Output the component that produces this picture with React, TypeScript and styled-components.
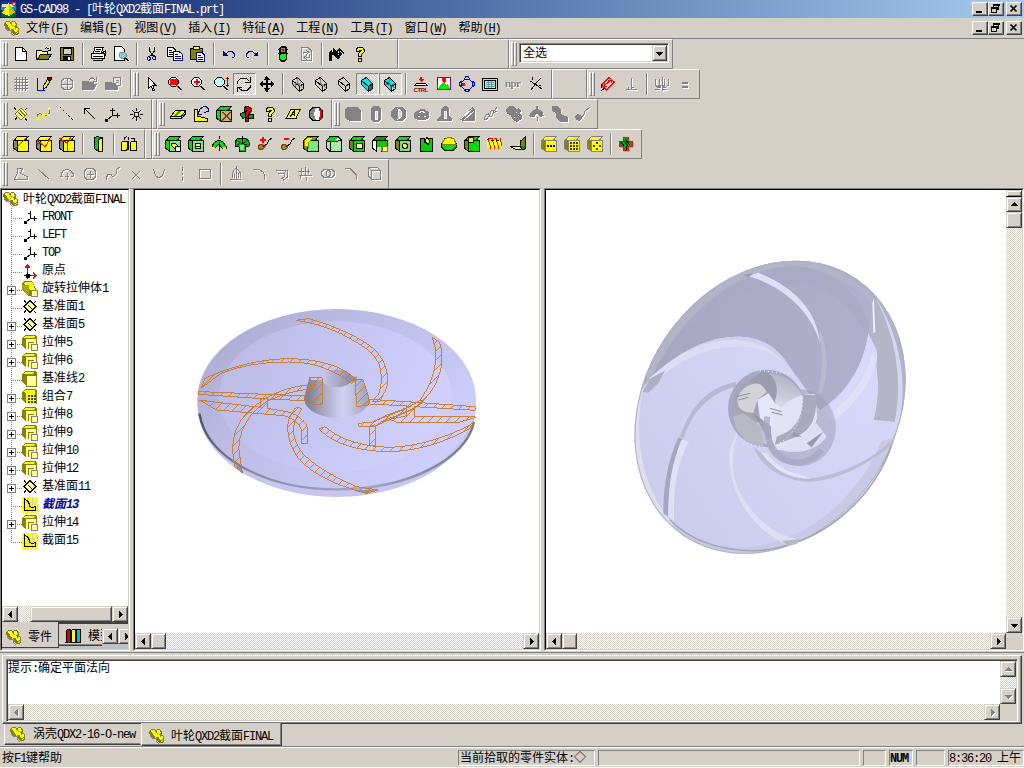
import React from "react";
import styled, { createGlobalStyle, css } from "styled-components";

const face = "#d4d0c8";
const shade = "#808080";
const dark = "#404040";

const Global = createGlobalStyle`
  * { box-sizing: border-box; }
  html, body { margin: 0; padding: 0; background: #fff; overflow: hidden; }
  body { font: 12px/14px "Noto Sans CJK SC", sans-serif; color: #000; }
`;

/* ---------- text ---------- */

const Line = styled.span`
  display: block;
  flex: none;
  white-space: pre;
  height: 14px;
  font: 12px/12px "Noto Sans CJK SC", sans-serif;
`;

const Latin = styled.span`
  font-family: "Liberation Mono", monospace;
  font-size: 12px;
  letter-spacing: -1.2px;
`;

function Txt({ children, className }: { children: string; className?: string }) {
  const runs = children.match(/[\x20-\x7e]+|[^\x20-\x7e]+/g) || [];
  return (
    <Line className={className}>
      {runs.map((r, i) => (/^[\x20-\x7e]/.test(r) ? <Latin key={i}>{r}</Latin> : <React.Fragment key={i}>{r}</React.Fragment>))}
    </Line>
  );
}

/* ---------- icons ---------- */

type Shape = [d: string, fill: string, stroke?: string];

const Svg = styled.svg<{ $off?: boolean }>`
  display: block;
  flex: none;
  overflow: visible;
  ${(p) => p.$off && css`filter: drop-shadow(1px 1px 0 #fff);`}
`;

const K = "#000";
const Y = "#ffff00";
const O = "#848200";
const G = "#00e000";
const R = "#ff0000";
const B = "#000084";
const D = "#848284";
const N = "none";

const cube = (front: string, side = O, top = front, line = K): Shape[] => [
  ["M.5 4.5L4.5.5H15.5L12 4.5Z", top, line],
  ["M.5 4.5L4.5 5V15.5L.5 12Z", side, line],
  ["M4.5 4.5H15.5V15.5H4.5Z", front, line],
  ["M4.5 4.5L1 3.5", N, line],
];
const wire = (front: string): Shape[] => [
  ["M2.500 4.500L7.500 1.500L13.500 7.500V12.500L9.500 15.500L2.500 8.500Z", front, K],
  ["M2.500 4.500L9.500 10.500L13.500 7.500M9.500 10.500V15", N, K],
];
const lens = (fill: string): Shape[] => [
  ["M4.500 1.500H8.500L11.500 4.500V7.500L8.500 10.500H4.500L1.500 7.500V4.500Z", fill, K],
  ["M10 10L14.500 14.500M11 10L15.500 14.500", N, K],
];
const plane: Shape[] = [
  ["M8 2L14 8L8 14L2 8Z", "#ffff94", O],
  ["M5 6L10 11M7 4.500L12 9.500", N, O],
  ["M1 1.500L3 3.500M12 12.500L14 14.500M2 13.500L4 11.500M12 4L14 2M6 7L9 10", N, K],
];
const treePlane: Shape[] = [
  ["M8 1.500L14 7.500L8 13.500L2 7.500Z", "#ffff94", K],
  ["M2 1.500L4 3.500M12 12L14 14M2 13.500L4 11.500M12 4L14 2M6 6L10 10", N, K],
];
const brace: Shape[] = [
  ["M0 4L2 1H5L7 3L8 1H11L13 4V7L15 8V13L13 15H10L7 12V9L4 10L0 6Z", O],
  ["M1 3L3 1.500H5L6 3L5 5H3ZM8 2H11L12 5L10 6L8 5ZM3 6L6 4L8 6L11 7V9H7L5 8ZM9 10L13 8L14 9V11L11 12ZM11 13L14 12V13L12 14Z", Y],
  ["M2 3H4M9 3H11M11 9.500H13", N, "#ffffb0"],
  ["M1 7L4 11L7 10V13L10 16", N, D],
];
const dots = "M6 6H8V8H6ZM9 6H11V8H9ZM12 6H14V8H12ZM6 9H8V11H6ZM9 9H11V11H9ZM12 9H14V11H12ZM6 12H8V14H6ZM9 12H11V14H9ZM12 12H14V14H12Z";

const icons: Record<string, Shape[]> = {
  app: [
    ["M-1-1H15V16H-1Z", "#00a0b0"], ["M-1 9H15V16H-1Z", "#006030"], ["M-1-1H15V3H-1Z", "#1030c0"], ["M0 2H13V5H0Z", "#e0e0ff"],
    ["M7 1L0 12L8 15Z", Y], ["M7 1L14 11L8 15Z", "#c6c300"], ["M11.500 .5H14.500V3.500H11.500Z", "#fff", R],
  ],
  brace,
  new: [["M2.500 1.500H9.500L13.500 5.500V14.500H2.500Z", "#fff", K], ["M9.500 1.500V5.500H13.500", N, K]],
  open: [["M.5 4.500H5.500L6.500 5.500H11.500V8.500H4.500L1.500 13.500H.5Z", "#ffff84", K], ["M4.500 8.500H15.500L12 13.500H1.500Z", O, K], ["M9 3L10.500 1.500L13.500 3.500M14.500 1V4.500H12", N, K]],
  save: [["M1.500 1.500H14.500V14.500H1.500Z", O, K], ["M4 2H12V8H4Z", face, K], ["M4 10H12V14H4Z", K], ["M9 11H11V14H9Z", "#fff"]],
  print: [["M5 1.500H13L11.500 7H3.500Z", "#fff", K], ["M1.500 7.500H14.500V12.500H1.500Z", "#fff", K], ["M3 10.500H13M3 14.500H12L14 12M6 3.500H11M5 5.500H10M12 7L15 5V10", N, K], ["M10 11H12V12H10Z", Y]],
  preview: [["M1.500.5H8.500L11.500 3.500V14.500H1.500Z", "#fff", K], ["M8 6H11L13 8V11L11 12H8L6 10V8Z", "#84d0d8", D], ["M12 12L15 15M13 12L16 15", N, K]],
  cut: [["M5.500 1V5L9.500 10M10.500 1V5L6.500 10", N, K], ["M4.500 10.500L3.500 11.500V13L4.500 14.500L6.500 13.500V11.500ZM9.500 9.500L11.500 10.500V13L10 13.500L8.500 12.500Z", N, B]],
  copy: [["M.5 1.500H6L8.500 4V10.500H.5Z", "#fff", K], ["M2 4.500H5M2 6.500H7M2 8.500H7", N, K], ["M6.500 5.500H12L15.500 8.500V14.500H6.500Z", "#fff", B], ["M8 8.500H11M8 10.500H14M8 12.500H14", N, B]],
  paste: [["M.5 2.500H12.500V13.500H.5Z", O, K], ["M4 .5H9V3.500H3.500Z", Y, K], ["M6.500 6.500H12L14.500 9V15.500H6.500Z", "#fff", B], ["M8 9.500H11M8 11.500H13M8 13.500H13", N, B]],
  undo: [["M2 5V10H7ZM2 5L7 10", B], ["M4.500 8L8 5.500H11L13.500 8V10.500L11 12", N, B]],
  redo: [["M14 5V10H9Z", B], ["M11.500 8L8 5.500H5L2.500 8V10.500L5 12", N, B]],
  light: [["M6 0H10L12 2V13L10 16H6L4 13V2Z", K], ["M6 2H10V6H6Z", D], ["M7 3H9V5H7Z", "#d00000"], ["M6 8H10L11 9V12L10 14H6L5 12V9Z", "#00ff00"], ["M3 3.500H5M11 3.500H13M3 7.500H5M11 7.500H13", N, K]],
  reload: [["M3.500 1.500H10L13.500 5V14.500H3.500Z", N, D], ["M5 8V6.500H9M8 4L11 6.500L8 8.500M11.500 8V11.500H8M9 9L6 11.500L9 14", N, D]],
  jug: [["M0 6L4 2L7 5L3 9V15H0Z", K], ["M4 8L10 2L15 7L9 14Z", K], ["M3 3V6M9 8H10M9 5V7", N, "#fff"], ["M11 5L14 8L11 11", N, "#fff"]],
  help: [["M4.500 5.500V3L6.500 1H10L12 3.500V6L9.500 8.500V10.500H6.500V7.500L9 5V4H7.500V5.500Z", Y, K], ["M6.500 12.500H9.500V15.500H6.500Z", Y, K]],
  grid: [["M3.500 1V15M6.500 1V15M9.500 1V15M12.500 1V15M1 3.500H15M1 6.500H15M1 9.500H15M1 12.500H15", N, D]],
  pencil: [["M1.500 2V14.500H9", N, "#0000ff"], ["M7.500 10L12 2.500L14.500 4.500L10 11.500L7.500 13Z", Y, K], ["M12 1H15V4L14 5L11 3Z", "#a00000", K]],
  globe: [["M5 2.500H11L13.500 5V11L11 13.500H5L2.500 11V5ZM8.500 2V14M2 8.500H14", N, D]],
  folder: [["M0 5H6L7 6H12V8H15L12 14H0Z", D], ["M7 4L10 1.500L13 4M14.500 1V5H11", N, D]],
  folder2: [["M0 6H6L7 7H13V14H0Z", D], ["M8.500 1.500H15.500V9.500H10.500V7H8.500ZM11 4.500H14M11 6.500H14", "#e8e6e2", D]],
  arrow: [["M4.500 1.500V12L7 10L9 14.500H10.500L9 9.500H12Z", "#fff", K]],
  zoomBox: [...lens("#fff"), ["M3 3H11V9H3Z", R]],
  zoomIn: [...lens("#fff"), ["M6 3H8V5H10V7H8V9H6V7H4V5H6Z", R]],
  zoomDyn: [...lens("#c0ffff"), ["M14.500 1V11M13 2.500H16M13 9.500H16", N, "#a00000"]],
  rotate: [["M1.500 8V5.500L4.500 2.500H10.500L13 5M14.500 1V6.500H9", N, K], ["M14.500 9V11L11 14.500H6L3 12M1.500 16V11.500H6", N, K]],
  move: [["M8 1V16M1 8.500H15", N, K], ["M7 1V16M1 7.500H15", N, K], ["M4.500 4L7.500 0L11 4ZM4.500 12L7.500 16L11 12ZM4 5L0 8L4 11.500ZM12 5L16 8L12 11.500Z", K]],
  wire1: [...wire(N), ["M7.500 1.500V7L13 12M7.500 7L2.500 9M5 7V11M11 6L8 9", N, D]],
  wire2: [...wire(N), ["M7.500 1.500V7L13 12", N, D]],
  wire3: wire(N),
  solid: [...wire("#00e8e8"), ["M9.500 10.500L13.500 7.500V12.500L9.500 15.500Z", "#008484", K]],
  solidEdge: [...wire("#00e8e8"), ["M9.500 10.500L13.500 7.500V12.500L9.500 15.500Z", "#80f0f0", K], ["M7.500 2V8L13 12M7.500 8L3 9", N, "#a06060"]],
  ctrl: [["M7 1H9V3H11L8 6L5 3H7Z", R], ["M3.500 7.500H12.500L14.500 9.500H1.500Z", "#fff", K]],
  image: [["M1.500 1.500H14.500V13.500H1.500Z", "#fff", "#840084"], ["M2 13L5 8L7 6L10 9L12 8L14 13Z", "#00f000"], ["M6 2H10V5L8 7L6 5Z", R]],
  orbit: [["M5.500 3.500H10.500L13.500 6.500V10.500L10.500 13.500H5.500L2.500 10.500V6.500Z", N, "#0000ff"], ["M5 3.500L7 .5H9L11 3.500M5 13.500L7 15.500H9L11 13.500M2.500 5L.5 7V9L2.500 11M13.500 5L15.500 7V9L13.500 11", N, "#0000ff"], ["M3 7H6V10H3Z", R]],
  screen: [["M.5 2.500H15.500V14.500H.5Z", face, K], ["M2.500 4.500H13.500V12.500H2.500Z", "#a8ece6", K], ["M4 6.500H12M4 8.500H12M4 10.500H12M6.500 5V12M9.500 5V12", N, "#60a0a0"]],
  npr: [],
  cross: [["M2 5L7 8L14 13M13 2L9 6L3 14M4.500 1V4M11 9L13 10", N, K]],
  dim: [["M1.500 9L9 1.500L14.500 6L6.500 14Z", N, R], ["M4 10L11 4M11 4H8M11.500 4V7M4.500 7V10.500H7", N, R], ["M1.500 8V12M1 15L5 12", N, K]],
  perp: [["M8.500 2V13M3 13.500H14M5.500 11V13M11 11H8", N, D]],
  sym: [["M1.500 3V9L3.500 11H6M5.500 3V9M10.500 3V11M14.500 3V9L12 11H9M8.500 1V15M1 13.500H6M9 13.500H13", N, D], ["M4 9H7V12H4ZM9 9H11V12H9Z", D]],
  equal: [["M5 6H11V8H5ZM5 10H11V12H5Z", D]],
  plane,
  treePlane,
  spline: [["M1.500 12V9L4 7L7 10L11 9.500L13.500 7V3", N, O], ["M0 11H3V14H0ZM6 8H9V11H6ZM12 1H14V4H12ZM11 8H14V10H11Z", Y]],
  dashLine: [["M1 1L15 15", N, "dash"]],
  vec: [["M3 3L13 13M2.500 8V2.500H8", N, K]],
  axes: [["M7.500 2V9.500H15M7.500 9.500L2 14M5 4.500H10M12.500 7V12", N, K], ["M0 13H3V16H0Z", K]],
  star: [["M6 6H10V10H6Z", Y, K], ["M8.500 2V5M8.500 11V15M2 8.500H5M12 8.500H15M4 4L6 6M11 11L13 13M13 4L11 6M6 11L4 13", N, K]],
  sheet: [["M.5 10.500L5.500 4.500H15.500L11.500 10.500V12.500H.5Z", Y, K], ["M8 5L4 10H7L11 5Z", "#00c000"], ["M0 10.500H11L15.500 5V8L11 13", N, K]],
  turn: [["M1.500 3.500H4.500V10L12 12H14.500V15.500H1.500Z", Y, K], ["M5 8L7 3L10.500 .5H13L15.500 3V5L11 7M4 3V8H9", N, B]],
  del: [...cube("#80d880", G, G), ["M6 6L15 15M15 6L6 15M7 6L16 15M14 6L5 15", N, R]],
  what: [["M1 8L5 6L8 9L4 13ZM9 8L15 9L14 13L10 12Z", "#00a000", K], ["M5 5V2L8 0L12 2V6L9 9V11H6V7L8 5V4L7 3V5ZM6 12H9V15H6Z", "#e00000", K]],
  slope: [["M1 12.500L6 3.500H15L11 12.500Z", Y, K], ["M5 11L9 5V10M6 8.500H9", N, K]],
  ball: [["M5 1.500H11L14.500 5V11L11 14.500H5L1.500 11V5Z", "#fff", K], ["M2 5L5 2H8L6 8L8 14H5L2 11Z", D], ["M11 2L14 5V11L11 14L12 8Z", R]],
  gBox: [["M0 3L3 1H12L16 5V15H5L0 12Z", D]],
  gBar: [["M3 2L6 0H10L13 2V14L10 16H6L3 14Z", D], ["M7 5H9V13H7Z", face, "#fff"]],
  gRing: [["M5 1H11L15 5V11L11 15H5L0 11V5Z", D], ["M7 3L10 5V11L7 13L8 8Z", face, "#fff"]],
  gDisc: [["M3 5L7 3H10L15 6V12L11 14H4L0 12V7Z", D], ["M5 7L8 5L11 7M4 10H6M10 10H12", N, "#fff"]],
  gCyl: [["M4 3L7 0H9L12 3V10L15 13V15H0V13L4 10Z", D], ["M7 5H9V12H7Z", face, "#fff"]],
  gWedge: [["M0 14L12 1L15 4V15H4Z", D], ["M1 13L12 3M4 14L14 5", N, "#fff"]],
  gChain: [["M1 13L3 9L7 8L8 5L12 4L14 1M3 14L5 11L9 10L10 7L14 5M1 13L4 13M5 7L7 10M9 4L12 7", N, D]],
  gBlob: [["M0 3L3 0H8L10 3L13 2L15 5L13 7L16 10V13L11 16L6 13L5 9L1 8Z", D], ["M10 6H11M12 9H13M8 11H9", N, "#fff"]],
  gFan: [["M0 10L3 5L7 3V0H9V3L13 5L15 10L11 11L9 8H7L6 11H2Z", D], ["M8.500 11V15", N, D]],
  gPipe: [["M0 0H6L9 4V8L16 11V16H8L4 12V7L0 5Z", D]],
  gSweep: [["M0 10L3 8L7 10V13L4 15L1 14Z", D], ["M7 11L9 8L10 5L15 1", N, D]],
  cutA: [...cube(Y, D), ["M0 15L15 0", N, R]],
  cutB: [...cube(Y, D), ["M1 4L9 11L14 3M0 7L5 8", N, R]],
  cutC: [...cube(Y, D), ["M0 2L8 7V15M8 7L12 1", N, R]],
  thin: [["M8.500 3.500L12.500 1.500V15L8.500 15.500Z", Y, K], ["M4.500 1.500L8 .5L12 2L8.500 4V15.500L4.500 12.500Z", "#00c040", K]],
  pair: [["M.5 6.500L2 5H6.500V13L5 14.500H.5ZM9.500 6.500L11 5H15.500V14.500H9.500Z", Y, K], ["M3.500 4V2L6 .5M7 4V1M10 2.500H13.500V5M7.500 5V14", N, K]],
  ext1: [...cube("#80e880", G, G), ["M6 7H10L14 11V14H11L7 10Z", Y, K], ["M10.500 10.500H15.500V15.500H10.500Z", "#fff", K]],
  ext2: [...cube("#80e880", G, G), ["M7.500 7.500H12.500V12.500H7.500Z", Y, K], ["M8 10.500H12", N, K]],
  rev1: [["M1 10L4 6L8 4L12 6L15 10V12H11L8 8L4 12H1Z", G, K], ["M8.500 0V3M8.500 6V15", N, K], ["M1 11H4V13H1ZM12 11H15V13H12Z", Y]],
  rev2: [["M1 6L4 2H12L15 6V10L11 11V15H5V11L1 10Z", "#00c000", K], ["M8.500 0V7M3 9L7 7L13 9M4 5L6 7M12 5L10 7", N, K], ["M6 9H10V14H6Z", "#80e880"]],
  swpA: [["M1 10L4 8L7 10V12L4 14L1 12Z", G, R], ["M6 11L10 8L12 4L15 2", N, K], ["M5 1H7V3H9V5H7V7H5V5H3V3H5Z", R]],
  swpB: [["M1 10L4 8L7 10V12L4 14L1 12Z", G, R], ["M6 11L10 8L12 4L15 2", N, K], ["M4 2H9V4H4Z", R]],
  fillet: [...cube("#80e880", G, G), ["M1 5L5 1H11L8 4L5 7V11L1 10Z", Y, O]],
  chamfer: [["M.5 5L4 .5H12L15.500 4V15.500H4L.5 12Z", "#a8e8a8", K], ["M1 5L4 1H12L8 5Z", G], ["M.5 5H12L15 4M4.500 5V15", N, K]],
  shell: [...cube(G), ["M7 7H13V12H7Z", "#ffff84", K]],
  cutOut: [...cube("#00d000", "#fff", "#00a000"), ["M10 10H15V15H10Z", "#ffff84", O], ["M5 11H9V16H5Z", face]],
  hole: [...cube("#80d880", O, G), ["M7.500 8.500L9 7.500H11L12.500 9V11L11 12.500H9L7.500 11Z", Y, K]],
  slot: [["M2 2H6V6H10V2H14V15H2Z", "#00d000", K], ["M7 5L9 1L12 5L10 9Z", Y, K]],
  dome: [["M.5 8L4 2H12L15.500 8V11L12 14.500H4L.5 11Z", G, K], ["M1 7L4 3L8 1L13 3L15 8H1Z", Y, O]],
  boss: [...cube(G), ["M4.500 1H9V6H4.500Z", Y, K]],
  coil: [["M0 3L3 2H15V13H0Z", Y], ["M1 2L4 13M5 2L8 13M9 2L12 13M13 2L15 10M2 2H5M7 2H10", N, R], ["M0 3.500H2M4 4H7M9 4H12", N, K]],
  bend: [["M0 10.500H9L15 13.500H6Z", "#ffff60", K], ["M10.500 10V5L15.500 1V12L12 14Z", O, K], ["M11 10H15V12H12Z", "#00a000"]],
  pat1: [...cube(Y, O, Y, D), ["M6 9H8V11H6ZM9 9H11V11H9ZM12 9H14V11H12Z", K]],
  pat2: [...cube(Y, O, Y, D), [dots, "#404000"]],
  pat3: [...cube(Y, O, Y, D), ["M9 6H11V8H9ZM6 9H8V11H6ZM12 9H14V11H12ZM9 12H11V14H9Z", "#404000"]],
  plus: [["M5.500 1.500H10.500V5.500H14.500V10.500H10.500V14.500H5.500V10.500H1.500V5.500H5.500Z", "#00b000", R], ["M3 6L6 10M7 3L12 9M8 10V14M6 5L10 10", N, K]],
  sk1: [["M1.500 13.500L4.500 6.500V2.500H9.500L7.500 7.500L11 9L14.500 10.500V13.500Z", N, D]],
  sk2: [["M2 3L13 13", N, D]],
  sk3: [["M1 10.500H4M6 10.500H10M12 10.500H15M8.500 7V14M2 8L4 5L8 3L12 5L14 8M2.500 7V10M14.500 7V10", N, D]],
  sk4: [["M5 2.500H11L13.500 5V11L11 13.500H5L2.500 11V5ZM8.500 5V12M5 8.500H12", N, D]],
  sk5: [["M1 13L3 8.500H6L8 11L11 8L12 3L15 1M1.500 10V14", N, D]],
  sk6: [["M4 5L12 13M12 5L4 13", N, D]],
  sk7: [["M2 3L5 10L8 12L11 10L14 3", N, D]],
  sk8: [["M8.500 1V5M8.500 7V9M8.500 11V15", N, D]],
  sk9: [["M2.500 3.500H13.500V12.500H2.500Z", N, D]],
  sk10: [["M2 13.500H14M4.500 12V7L6 4L8 2.500L10 4L12.500 7V12M8.500 0V14M6.500 7V12M10.500 7V12", N, D]],
  sk11: [["M2 3.500H8L12 6L13.500 9V14", N, D]],
  sk12: [["M2 4.500H13.500V11L9 14.500M4 7.500H10V11L7 13M13 4L10 7", N, D]],
  sk13: [["M4.500 2V7M1 5.500H13M8.500 1V10M11.500 3V8M2 9.500H15M9.500 11V15M5 7L3 13", N, D]],
  sk14: [["M4 3.500H8L10.500 6V9L8 11.500H4L1.500 9V6ZM8 3.500H12L14.500 6V9L12 11.500H8L6.500 9V6Z", N, D]],
  sk15: [["M2 2.500H7L13.500 9V14", N, D]],
  sk16: [["M5.500 4.500H14.500V13.500H5.500ZM2.500 10V1.500H11.500L14 4M2.500 1.500L5.500 4.500M2.500 10L5.500 13", N, D]],
  origin: [["M5.500 13V1M3 4.500H8M5.500 1L3 5M5.500 1L8 5M6 12.500H14M11 9.500L14 12.500L11 15.500", N, R], ["M4 11H7V14H4Z", K, K], ["M2 12.500H9M5.500 9V16", N, K]],
  datum: [["M8.500 2V9.500H15M8.500 9.500L4 13M6 4.500H9M12.500 7V12", N, K], ["M2 12H5V15H2Z", K]],
  rotBody: [["M0 2L3 0H10L15 10V15H7L0 9Z", O], ["M1 2L4 1H10L14 10H9Z", Y], ["M0 4H7V14L0 8Z", "#a8a800"], ["M9.500 9.500H15.500V15.500H9.500Z", "#ffff84", D]],
  extrude: [
    ["M0 3L3 0H13L15 2V15H4L0 11Z", O],
    ["M1 3L4 1H13L11 3Z", Y],
    ["M4 4H14V15H4Z", "#ffffa0"],
    ["M6.500 14V7.500H12M9 9H13V11H9Z", N, O],
    ["M9.500 9.500H15.500V15.500H9.500Z", "#ffff94", D],
  ],
  datumLine: [["M0 3L3 0H13L15 2V15H4L0 11Z", O], ["M1 3L4 1H12L10 3Z", Y], ["M4.500 4.500H14.500V15H4.500Z", "#ffffa0", O]],
  combo: [["M0 3L3 0H13L15 2V15H4L0 11Z", O], ["M1 3L4 1H13L14 15H4V4Z", Y], [dots, "#404000"]],
  section: [
    ["M0 0H16V16H0Z", Y],
    ["M5.500 0V16M10.500 0V16M0 5.500H16M0 10.500H16", N, "#d6d3a0"],
    ["M2.500 1V13.500H13.500V9.500L10 10.500L8 9.500L6.500 5L3 2", N, K],
  ],
  books: [["M1 3L3 1H5V14H1Z", "#e00000", K], ["M6 3L8 1H10V14H6Z", Y, K], ["M11 3L12 1H15V14H11Z", "#00c0c0", K], ["M0 14.500H16M5 2H6M10 2H11", N, K]],
};

function Icon({ name, off, size = 16 }: { name: string; off?: boolean; size?: number }) {
  return (
    <Svg width={size} height={size} viewBox="0 0 16 16" shapeRendering="crispEdges" $off={off}>
      {icons[name].map(([d, fill, stroke], i) => (
        <path key={i} d={d} fill={fill} stroke={stroke === "dash" ? K : stroke} strokeDasharray={stroke === "dash" ? "2 2" : undefined} />
      ))}
      {name === "ctrl" && <text x="0.5" y="15.500" fontSize="6" fontWeight="700" textLength="15" fill="#a00000" fontFamily="Liberation Sans">CTRL</text>}
      {name === "npr" && <text x="0" y="11" fontSize="11" fontWeight="700" textLength="16" fill={D} fontFamily="Liberation Serif">npr</text>}
    </Svg>
  );
}

/* ---------- frame parts ---------- */

const Window = styled.div`
  width: 1024px;
  height: 767px;
  display: flex;
  flex-direction: column;
  background: ${face};
  overflow: hidden;
`;

const TitleBar = styled.div`
  height: 18px;
  flex: none;
  display: flex;
  align-items: center;
  gap: 3px;
  padding: 0 2px;
  color: #fff;
  background: linear-gradient(90deg, #0a246a, #a6caf0);
`;

const MenuBar = styled.div`
  height: 21px;
  flex: none;
  display: flex;
  align-items: center;
  padding: 0 2px 0 4px;
  border-bottom: 1px solid ${shade};
`;

const MenuItems = styled.div`
  flex: 1;
  display: flex;
  gap: 12px;
  margin-left: 6px;
`;

const Access = styled.u`
  text-decoration: underline;
  text-underline-offset: 2px;
`;

const Caption = styled.div`
  display: flex;
  margin-left: auto;
`;

const CaptionButton = styled.div<{ $gap?: boolean }>`
  width: 16px;
  height: 14px;
  margin-left: ${(p) => (p.$gap ? 2 : 0)}px;
  background: ${face};
  border: 1px solid;
  border-color: #fff ${dark} ${dark} #fff;
  box-shadow: inset -1px -1px ${shade};
`;

function CaptionButtons() {
  return (
    <Caption>
      <CaptionButton><Svg width="14" height="12"><path d="M3 8H9V10H3Z" /></Svg></CaptionButton>
      <CaptionButton>
        <Svg width="14" height="12" shapeRendering="crispEdges">
          <path d="M4 1H10V2H4ZM4.500 1V4M9.500 1V7M7 6.500H10M2 4H8V5H2ZM2.500 4V9.500H7.500V4" fill="none" stroke="#000" />
        </Svg>
      </CaptionButton>
      <CaptionButton $gap>
        <Svg width="14" height="12"><path d="M3.500 2.500L9.500 8.500M9.500 2.500L3.500 8.500" stroke="#000" strokeWidth="1.700" /></Svg>
      </CaptionButton>
    </Caption>
  );
}

const ToolRow = styled.div<{ $h?: number }>`
  display: flex;
  height: ${(p) => p.$h ?? 30}px;
  flex: none;
`;

const Band = styled.div<{ $w: number }>`
  width: ${(p) => p.$w}px;
  height: 30px;
  flex: none;
  display: flex;
  align-items: center;
  padding-left: 1px;
  border: 1px solid;
  border-color: #fff ${shade} ${shade} #fff;
`;

const Grip = styled.div`
  width: 6px;
  height: 24px;
  margin-right: 2px;
  display: flex;
  &::before, &::after {
    content: "";
    width: 3px;
    border: 1px solid;
    border-color: #fff ${shade} ${shade} #fff;
  }
`;

const ToolButton = styled.div<{ $on?: boolean }>`
  width: 23px;
  height: 22px;
  flex: none;
  display: flex;
  align-items: center;
  padding-left: ${(p) => (p.$on ? 2 : 3)}px;
  ${(p) => p.$on && css`
    border: 1px solid;
    border-color: ${shade} #fff #fff ${shade};
    background: repeating-conic-gradient(#e8e6e2 0 25%, ${face} 0 50%) 0 0 / 2px 2px;
  `}
`;

const Separator = styled.div`
  width: 2px;
  height: 22px;
  margin: 0 3px;
  border-left: 1px solid ${shade};
  border-right: 1px solid #fff;
`;

/* "|" is a separator, a leading "-" marks a disabled tool, "*" a pressed one */
function Tools({ items, w }: { items: string; w: number }) {
  return (
    <Band $w={w}>
      <Grip />
      {items.split(" ").map((t, i) =>
        t === "|" ? <Separator key={i} /> : (
          <ToolButton key={i} $on={t[0] === "*"}>
            <Icon name={t.replace(/^[-*]/, "")} off={t[0] === "-"} />
          </ToolButton>
        )
      )}
    </Band>
  );
}

const Combo = styled.div`
  display: flex;
  width: 150px;
  height: 20px;
  align-items: center;
  padding-left: 3px;
  background: #fff;
  border: 1px solid;
  border-color: ${shade} #fff #fff ${shade};
  box-shadow: inset 1px 1px ${dark}, inset -1px -1px ${face};
  margin-bottom: 2px;
`;

const Press = styled.div<{ $w?: number; $h?: number }>`
  width: ${(p) => p.$w ?? 16}px;
  height: ${(p) => p.$h ?? 16}px;
  flex: none;
  display: flex;
  align-items: center;
  justify-content: center;
  background: ${face};
  border: 1px solid;
  border-color: ${face} ${dark} ${dark} ${face};
  box-shadow: inset 1px 1px #fff, inset -1px -1px ${shade};
`;

const ComboPress = styled(Press)`
  margin-left: auto;
  margin-right: 1px;
`;

const arrows = {
  l: "M5 0V7L1 3.500Z",
  r: "M2 0V7L6 3.500Z",
  u: "M0 5H7L3.500 1Z",
  d: "M0 2H7L3.500 6Z",
};

function ArrowButton({ dir, off, w, h }: { dir: keyof typeof arrows; off?: boolean; w?: number; h?: number }) {
  return (
    <Press $w={w} $h={h}>
      <Svg width="7" height="7" shapeRendering="crispEdges" $off={off}><path d={arrows[dir]} fill={off ? shade : K} /></Svg>
    </Press>
  );
}

const Track = styled.div<{ $size?: number }>`
  flex: ${(p) => (p.$size ? `0 0 ${p.$size}px` : "1")};
  background: repeating-conic-gradient(#fff 0 25%, ${face} 0 50%) 0 0 / 2px 2px;
`;

const HBar = styled.div`
  display: flex;
  height: 16px;
  flex: none;
`;

const VBar = styled.div`
  display: flex;
  flex-direction: column;
  width: 16px;
  flex: none;
`;

/* ---------- work area ---------- */

const Work = styled.div`
  display: flex;
  height: 464px;
  flex: none;
`;

const Pane = styled.div<{ $w: number; $gap?: number }>`
  width: ${(p) => p.$w}px;
  flex: none;
  height: 463px;
  margin-right: ${(p) => p.$gap ?? 0}px;
  display: flex;
  flex-direction: column;
  border: 1px solid;
  border-color: ${shade} #fff #fff ${shade};
`;

const PaneInner = styled.div`
  flex: 1;
  min-height: 0;
  display: flex;
  flex-direction: column;
  border: 1px solid;
  border-color: #000 ${face} ${face} #000;
`;

const Tree = styled.div`
  flex: 1;
  background: #fff;
  overflow: hidden;
`;

const Row = styled.div<{ $root?: boolean }>`
  height: 18px;
  display: flex;
  align-items: center;
  padding-left: ${(p) => (p.$root ? 1 : 5)}px;
`;

const RootLabel = styled(Txt)`
  margin-left: 4px;
`;

const Branch = styled.div<{ $last?: boolean }>`
  width: 15px;
  height: 18px;
  flex: none;
  display: flex;
  align-items: center;
  background:
    repeating-linear-gradient(${shade} 0 1px, transparent 1px 2px) 4px 0 / 1px ${(p) => (p.$last ? "10px" : "18px")} no-repeat,
    repeating-linear-gradient(90deg, ${shade} 0 1px, transparent 1px 2px) 4px 10px / 11px 1px no-repeat;
`;

const Expander = styled.div`
  width: 9px;
  height: 9px;
  margin-top: 3px;
  border: 1px solid ${shade};
  background:
    linear-gradient(#000, #000) 1px 3px / 5px 1px no-repeat,
    linear-gradient(#000, #000) 3px 1px / 1px 5px no-repeat,
    #fff;
`;

const NodeLabel = styled.div<{ $hot?: boolean }>`
  margin-left: 4px;
  margin-bottom: 2px;
  height: 14px;
  display: flex;
  ${(p) => p.$hot && css`
    color: #0000a0;
    span { font-weight: 700; font-style: italic; }
  `}
`;

const nodes: [icon: string, label: string, expandable?: boolean][] = [
  ["datum", "FRONT"], ["datum", "LEFT"], ["datum", "TOP"], ["origin", "原点"],
  ["rotBody", "旋转拉伸体1", true], ["treePlane", "基准面1"], ["treePlane", "基准面5", true],
  ["extrude", "拉伸5", true], ["extrude", "拉伸6", true], ["datumLine", "基准线2"],
  ["combo", "组合7", true], ["extrude", "拉伸8", true], ["extrude", "拉伸9", true],
  ["extrude", "拉伸10", true], ["extrude", "拉伸12", true], ["treePlane", "基准面11", true],
  ["section", "截面13"], ["extrude", "拉伸14", true], ["section", "截面15"],
];

const SideTabs = styled.div`
  height: 27px;
  flex: none;
  display: flex;
  align-items: flex-start;
  overflow: hidden;
  background: #c0c0c0;
`;

const SideTab = styled.div<{ $w: number; $active?: boolean }>`
  width: ${(p) => p.$w}px;
  height: ${(p) => (p.$active ? 26 : 24)}px;
  flex: none;
  overflow: hidden;
  display: flex;
  align-items: center;
  gap: ${(p) => (p.$active ? 6 : 7)}px;
  padding-left: ${(p) => (p.$active ? 4 : 6)}px;
  padding-top: 4px;
  background: ${face};
  border-right: ${(p) => (p.$active ? 1 : 0)}px solid ${dark};
  border-bottom: 1px solid ${dark};
  box-shadow: ${(p) => (p.$active ? "none" : `inset 0 2px ${dark}, inset 0 -1px ${shade}`)};
`;

const SideNav = styled.div`
  display: flex;
  padding-top: 4px;
  height: 22px;
  border-top: 2px solid ${dark};
  background: ${face};
`;

const ViewRow = styled.div`
  flex: 1;
  min-height: 0;
  display: flex;
`;

const Viewport = styled.div`
  flex: 1;
  background: #fff;
  overflow: hidden;
`;

const Corner = styled.div`
  width: 16px;
  flex: none;
`;

const SplitBox = styled.div`
  height: 7px;
  flex: none;
  border: 1px solid;
  border-color: ${face} ${dark} #000 ${face};
  box-shadow: inset 1px 1px #fff, inset -1px -1px ${shade};
`;

const sectionPaths = [
  "M318 61L355 56C430 75 520 115 560 155C590 190 602 240 585 275L568 306H545L565 285C578 250 576 220 566 190C550 160 525 140 490 122C440 90 390 75 345 66Z",
  "M727 112L749 127C760 160 758 200 745 230C735 265 705 300 680 320C650 340 600 355 560 378L508 380L505 370L545 366C600 345 650 330 690 300C720 260 740 210 737 150Z",
  "M34 264L45 235C110 205 200 178 290 176C370 176 430 190 480 222L497 240L485 250C440 215 390 195 330 187C240 182 150 195 90 222Z",
  "M25 274L60 276L345 288V302L230 297L25 283Z",
  "M28 300L65 305L212 322V295H232V325L290 335C330 345 353 370 353 390V430H334V388C325 365 300 350 280 347L80 330Z",
  "M135 500C120 440 130 380 170 340C210 300 260 270 330 258L378 254L370 265C300 275 250 290 215 315C170 350 145 400 147 450L157 520Z",
  "M315 325L325 322L335 327L325 345C305 370 305 410 330 450C360 490 430 530 500 560L565 570L530 580C450 560 370 525 330 480C295 440 285 380 300 350Z",
  "M358 233H397V313H370L343 301L350 275L358 265Z",
  "M495 238H518L537 295L535 315L500 320Z",
  "M537 298L665 306L856 320V331L673 320V350H856V353L805 367H620L600 358L650 347V318L540 312Z",
  "M390 385L405 380C450 420 520 440 600 442C680 440 780 410 848 370L840 385C770 425 680 455 590 455C500 452 430 430 390 390Z",
  "M540 378L556 374V438H538Z",
  "M556 380C575 355 650 345 700 305L690 300C650 335 570 340 540 378",
];

function SectionView() {
  return (
    <Svg width="404" height="443">
      <defs>
        <linearGradient id="disc" x1="0" y1="0" x2="1" y2=".7">
          <stop offset="0" stopColor="#a8a8ce" /><stop offset=".45" stopColor="#bcbce6" /><stop offset="1" stopColor="#d0d0ff" />
        </linearGradient>
        <linearGradient id="face" x1="0" y1="0" x2="1" y2=".35">
          <stop offset="0" stopColor="#b9b9e2" /><stop offset=".5" stopColor="#c5c5f2" /><stop offset="1" stopColor="#d0d0ff" />
        </linearGradient>
        <linearGradient id="hub" x1="0" x2="1">
          <stop offset="0" stopColor="#77778c" /><stop offset=".3" stopColor="#a9a9c4" /><stop offset=".6" stopColor="#d2d2f4" /><stop offset="1" stopColor="#a0a0bc" />
        </linearGradient>
        <linearGradient id="bore" x1="0" x2="1">
          <stop offset="0" stopColor="#c8c8ee" /><stop offset="1" stopColor="#8c8ca6" />
        </linearGradient>
        <linearGradient id="rim" x1="0" x2="1">
          <stop offset="0" stopColor="#55555f" /><stop offset=".2" stopColor="#8c8ca4" /><stop offset=".6" stopColor="#a4a4c4" /><stop offset="1" stopColor="#77778a" />
        </linearGradient>
        <pattern id="hatch" width="27" height="27" patternUnits="userSpaceOnUse">
          <path d="M-2 29L29-2" stroke="#cf7a24" strokeWidth="2.600" />
        </pattern>
      </defs>
      <g transform="translate(55 110) scale(.33333)">
        <ellipse cx="440" cy="316" rx="418" ry="275" fill="#c6c6f0" />
        <ellipse cx="440" cy="299" rx="418" ry="272" fill="url(#disc)" />
        <ellipse cx="436" cy="290" rx="350" ry="226" fill="url(#face)" />
        <path d="M28 340C50 475 230 568 440 568C650 568 830 480 852 365" fill="none" stroke="url(#rim)" strokeWidth="7" />
        <path d="M358 233L343 290C340 330 390 353 440 353C500 353 540 330 537 290L518 238Z" fill="url(#hub)" />
        <path d="M362 226H520V240H362Z" fill="#c4c4f0" />
        <path d="M470 230H500V245H470Z" fill="#8e8ea8" />
        <ellipse cx="440" cy="235" rx="46" ry="27" fill="url(#bore)" />
        <g shapeRendering="crispEdges" stroke="#cf7a24" strokeWidth="2.800" fill="url(#hatch)">
          {sectionPaths.map((d) => <path key={d} d={d} />)}
        </g>
        <path d="M132 495L155 500L160 522Z M490 572L560 568L530 580Z" fill="#8a7c78" opacity=".7" />
      </g>
    </Svg>
  );
}

function SolidView() {
  return (
    <Svg width="460" height="443">
      <defs>
        <linearGradient id="lower" x1="0" y1="0" x2="1" y2=".3">
          <stop offset="0" stopColor="#cacaea" /><stop offset="1" stopColor="#d8d8fa" />
        </linearGradient>
        <linearGradient id="upper" x1="0" x2="1">
          <stop offset="0" stopColor="#a6a6c0" /><stop offset="1" stopColor="#b2b2d0" />
        </linearGradient>
        <linearGradient id="core" x1="0" y1="0" x2="1" y2="1">
          <stop offset="0" stopColor="#a4a4b8" /><stop offset=".5" stopColor="#dedeee" /><stop offset="1" stopColor="#b0b0cc" />
        </linearGradient>
        <clipPath id="rimClip"><ellipse cx="450" cy="472" rx="465" ry="378" transform="rotate(-56.200 450 472)" /></clipPath>
      </defs>
      <g transform="translate(74 60) scale(.33333)">
        <ellipse cx="450" cy="472" rx="465" ry="378" transform="rotate(-56.200 450 472)" fill="#c9c9e6" />
        <g clipPath="url(#rimClip)">
          <ellipse cx="434" cy="470" rx="448" ry="360" transform="rotate(-56.200 434 470)" fill="url(#lower)" />
          <path d="M60 400L95 385C190 300 270 262 350 260C430 258 480 300 510 352L545 400L600 480C680 430 730 350 745 250C775 330 785 430 762 510L900 520V0H60Z" fill="url(#upper)" />
          <path d="M60 420C100 230 270 70 440 40L530 33C680 40 780 140 840 260L830 275C760 130 650 60 530 48C370 50 180 190 95 385Z" fill="#b4b4c8" />
          <path d="M95 385C180 180 350 100 560 100C690 140 745 250 770 330C760 140 640 55 520 48C350 50 170 200 95 385Z" fill="#a9a9c6" opacity=".65" />
          <path d="M762 145C820 230 850 340 830 515L762 510C790 390 765 310 745 250Z" fill="#b5b5c9" />
          <path d="M762 510L840 518L815 565L720 590Z" fill="#d5d5f8" />
          <path d="M745 250C730 350 690 430 605 485L645 500C740 430 780 370 770 300Z" fill="#d8d8fb" />
          <path d="M765 140C830 240 870 380 835 530L822 525C850 400 830 260 765 140Z" fill="#d6d6f0" />
          <path d="M66 430C45 560 60 700 150 810L165 830L120 800C30 700 25 540 60 430Z" fill="#dedef0" />
        </g>
        <ellipse cx="450" cy="472" rx="463" ry="376" transform="rotate(-56.200 450 472)" fill="none" stroke="#b1b1c6" strokeWidth="3" />
        <path d="M150 810C240 900 400 925 520 880C670 830 780 700 818 575" fill="none" stroke="#a5a5b8" strokeWidth="5" />
        <path d="M385 78L415 68C520 110 590 180 600 278C570 180 490 110 385 78" fill="#e0e0f5" />
        <path d="M370 74L400 70L385 82Z" fill="#9a9aac" />
        <path d="M600 240C628 310 625 370 606 430L595 425C610 360 608 300 597 260Z" fill="#b9b9d0" />
        <path d="M762 145L766 245L760 250L757 160Z" fill="#eeeefe" />
        <path d="M88 385C180 300 270 260 350 260C430 260 480 300 508 355C460 305 410 288 350 290C260 290 170 330 100 405Z" fill="#dcdcf2" />
        <path d="M88 385C180 300 270 260 350 260C430 260 480 300 508 355C460 290 400 270 340 270C250 270 170 310 88 385" fill="#cfcfee" />
        <path d="M68 425L92 385L135 362L115 400L85 428Z" fill="#b0b0c5" />
        <path d="M190 565C220 480 270 430 345 410L350 395C270 410 215 460 180 560Z" fill="#b8b8d2" />
        <path d="M175 562L190 568C155 640 145 710 145 800L130 790C130 700 145 630 175 562Z" fill="#a6a6bf" />
        <path d="M185 568L207 575C170 640 160 720 162 812L145 800C145 710 155 640 185 568Z" fill="#e0e0f5" />
        <path d="M350 550C310 610 330 700 370 770C410 830 450 860 500 885L540 870C470 855 420 820 380 760C330 690 330 620 352 560Z" fill="#dedef4" />
        <path d="M485 872L540 868L530 882L505 888Z" fill="#b8b8c4" />
        <path d="M425 610C480 680 540 695 600 680C680 665 770 620 825 560L820 580C750 640 660 690 570 696C490 690 430 660 400 590Z" fill="#bcbcd3" />
        <path d="M425 610C470 670 520 685 570 686L550 676C500 668 460 640 440 608Z" fill="#e4e4f8" />
        <path d="M755 310C745 380 690 450 620 495L645 510C710 460 760 390 768 330Z" fill="#e0e0f8" />
        <circle cx="440" cy="475" r="116" fill="#9a9ab4" opacity=".75" />
        <path d="M540 418A108 115 0 1 1 500 640C450 630 420 570 430 500C440 450 490 420 540 418Z" fill="#9c9cb8" opacity=".5" />
        <ellipse cx="460" cy="480" rx="112" ry="98" transform="rotate(60 460 480)" fill="url(#core)" />
        <circle cx="403" cy="455" r="63" fill="#a5a5b2" />
        <path d="M352 450C360 415 390 395 430 402L440 425L412 450L400 488C375 490 350 475 352 450Z" fill="#d2d2d8" />
        <path d="M430 362C465 375 480 410 465 450L440 425C425 400 410 395 385 395Z" fill="#9c9cae" />
        <path d="M412 450L445 430L465 460L490 478L470 545L420 505Z" fill="#e6e6fa" />
        <path d="M400 490L475 545L445 570Z" fill="#8f8f9c" opacity=".7" />
        <path d="M340 500C345 550 385 590 430 590L425 530L370 490Z" fill="#b9b9c6" />
        <path d="M455 560C440 500 500 430 585 432L592 500C580 560 520 605 465 600Z" fill="#e2e2f5" />
        <path d="M470 560C530 540 550 500 548 435L588 435C592 500 575 540 530 560L465 585Z" fill="#aaaabf" />
        <path d="M480 600L590 520L620 560C590 600 540 615 480 600Z" fill="#dedef6" />
        <path d="M520 545L545 560L515 560ZM560 580L610 545L575 592Z" fill="#9a9aae" />
        <path d="M442 500C430 580 475 638 535 638C570 635 590 620 605 600" fill="none" stroke="#a8a8c4" strokeWidth="18" opacity=".8" />
        <path d="M350 440L390 430M355 450L385 442M450 475L485 485M455 487L488 495" stroke="#8e8e9e" strokeWidth="3" />
        <path d="M470 585C530 550 550 500 548 440M370 580L430 590M420 362L520 372" fill="none" stroke="#f4f4ff" strokeWidth="3" strokeDasharray="3 9" />
      </g>
    </Svg>
  );
}

/* ---------- bottom area ---------- */

const Output = styled.div`
  height: 72px;
  flex: none;
  display: flex;
  border-top: 1px solid ${shade};
  padding: 2px 2px 0 2px;
`;

const OutputFrame = styled.div`
  flex: 1;
  display: flex;
  padding: 3px 3px 0 3px;
  border: 1px solid;
  border-color: #fff ${dark} ${dark} #fff;
  box-shadow: inset -1px -1px ${shade};
`;

const OutputEdit = styled.div`
  flex: 1;
  height: 63px;
  display: flex;
  border: 1px solid;
  border-color: ${shade} #fff #fff ${shade};
  box-shadow: inset 1px 1px ${dark};
  padding: 1px;
`;

const OutputMain = styled.div`
  flex: 1;
  display: flex;
  flex-direction: column;
`;

const OutputText = styled.div`
  flex: 1;
  background: #fff;
`;

const DocTabs = styled.div`
  height: 23px;
  flex: none;
  display: flex;
  padding-left: 4px;
`;

const DocTab = styled.div<{ $w: number; $active?: boolean }>`
  width: ${(p) => p.$w}px;
  height: ${(p) => (p.$active ? 23 : 21)}px;
  flex: none;
  display: flex;
  align-items: center;
  gap: ${(p) => (p.$active ? 6 : 7)}px;
  margin-top: ${(p) => (p.$active ? -1 : 0)}px;
  padding-left: ${(p) => (p.$active ? 7 : 5)}px;
  padding-top: ${(p) => (p.$active ? 4 : 0)}px;
  background: ${face};
  border: 1px solid;
  border-top: 0;
  border-color: ${(p) => (p.$active ? `${face} ${dark} ${dark} #fff` : `${face} ${face} ${dark} #fff`)};
  box-shadow: inset ${(p) => (p.$active ? -1 : 0)}px -1px ${shade};
`;

const StatusBar = styled.div`
  height: 20px;
  flex: none;
  display: flex;
  gap: 3px;
  padding: 2px 1px 1px 2px;
  border-top: 1px solid #fff;
  box-shadow: 0 -1px ${shade};
`;

const Hint = styled.div`
  width: 453px;
  flex: none;
  padding-top: 1px;
`;

const Field = styled.div<{ $w?: number; $bold?: boolean }>`
  width: ${(p) => p.$w}px;
  flex: none;
  height: 16px;
  padding-left: ${(p) => (p.$bold ? 0 : 1)}px;
  white-space: nowrap;
  border: 1px solid;
  border-color: ${shade} #fff #fff ${shade};
  ${(p) => p.$bold && css`span { font-weight: 700; }`}
`;

const Clock = styled(Field)`
  padding-left: 0;
`;

const menus: [string, string][] = [
  ["文件", "F"], ["编辑", "E"], ["视图", "V"], ["插入", "I"], ["特征", "A"],
  ["工程", "N"], ["工具", "T"], ["窗口", "W"], ["帮助", "H"],
];

export default function App() {
  return (
    <>
      <Global />
      <Window>
        <TitleBar>
          <Icon name="app" size={15} />
          <Txt>GS-CAD98 - [叶轮QXD2截面FINAL.prt]</Txt>
          <CaptionButtons />
        </TitleBar>
        <MenuBar>
          <Icon name="brace" />
          <MenuItems>
            {menus.map(([label, key]) => (
              <Line key={key}>{label}<Latin>(<Access>{key}</Access>)</Latin></Line>
            ))}
          </MenuItems>
          <CaptionButtons />
        </MenuBar>

        <ToolRow>
          <Tools w={398} items="new open save | print preview | cut copy paste | undo redo | light -reload | jug help" />
          <Band $w={111} />
          <Band $w={164}>
            <Grip />
            <Combo><Txt>全选</Txt><ComboPress $w={15}><Svg width="7" height="7" shapeRendering="crispEdges"><path d={arrows.d} /></Svg></ComboPress></Combo>
          </Band>
        </ToolRow>
        <ToolRow>
          <Tools w={131} items="-grid pencil -globe -folder -folder2" />
          <Tools w={421} items="arrow zoomBox zoomIn zoomDyn *rotate move | wire1 wire2 wire3 *solid *solidEdge | ctrl image orbit screen -npr cross" />
          <Band $w={35} />
          <Tools w={113} items="dim -perp | -sym -equal" />
        </ToolRow>
        <ToolRow>
          <Tools w={152} items="plane spline dashLine vec axes star" />
          <Band $w={5} />
          <Tools w={175} items="sheet turn del what help slope ball" />
          <Tools w={266} items="-gBox -gBar -gRing -gDisc -gCyl -gWedge -gChain -gBlob -gFan -gPipe -gSweep" />
        </ToolRow>
        <ToolRow>
          <Tools w={145} items="cutA cutB cutC | thin | pair" />
          <Band $w={7} />
          <Tools w={490} items="ext1 ext2 rev1 rev2 swpA swpB fillet chamfer shell cutOut hole slot dome boss coil bend | pat1 pat2 pat3 | plus" />
        </ToolRow>
        <ToolRow $h={29}>
          <Tools w={389} items="-sk1 -sk2 -sk3 -sk4 -sk5 -sk6 -sk7 -sk8 -sk9 | -sk10 -sk11 -sk12 -sk13 -sk14 -sk15 -sk16" />
        </ToolRow>

        <Work>
          <Pane $w={130} $gap={3}>
            <PaneInner>
              <Tree>
                <Row $root><Icon name="brace" /><RootLabel>叶轮QXD2截面FINAL</RootLabel></Row>
                {nodes.map(([icon, label, expandable], i) => (
                  <Row key={i}>
                    <Branch $last={i === nodes.length - 1}>{expandable && <Expander />}</Branch>
                    <Icon name={icon} />
                    <NodeLabel $hot={label === "截面13"}><Txt>{label}</Txt></NodeLabel>
                  </Row>
                ))}
              </Tree>
              <HBar>
                <ArrowButton dir="l" />
                <Track $size={12} />
                <Press $w={82} />
                <ArrowButton dir="r" />
              </HBar>
              <SideTabs>
                <SideTab $w={57} $active><Icon name="brace" /><Txt>零件</Txt></SideTab>
                <SideTab $w={43}><Icon name="books" /><Txt>模型</Txt></SideTab>
                <SideNav><ArrowButton dir="l" /><ArrowButton dir="r" /></SideNav>
              </SideTabs>
            </PaneInner>
          </Pane>
          <Pane $w={408} $gap={3}>
            <PaneInner>
              <Viewport><SectionView /></Viewport>
              <HBar><ArrowButton dir="l" /><Press $w={15} /><Track /><ArrowButton dir="r" /></HBar>
            </PaneInner>
          </Pane>
          <Pane $w={480}>
            <PaneInner>
              <ViewRow>
                <Viewport><SolidView /></Viewport>
                <VBar><SplitBox /><ArrowButton dir="u" h={15} /><Press /><Track /><ArrowButton dir="d" /></VBar>
              </ViewRow>
              <HBar><ArrowButton dir="l" /><Press $w={15} /><Track /><ArrowButton dir="r" /><Corner /></HBar>
            </PaneInner>
          </Pane>
        </Work>

        <Output>
          <OutputFrame>
            <OutputEdit>
              <OutputMain>
                <OutputText><Txt>提示:确定平面法向</Txt></OutputText>
                <HBar><ArrowButton dir="l" off /><Track /><ArrowButton dir="r" off /></HBar>
              </OutputMain>
              <VBar><ArrowButton dir="u" off /><Track $size={11} /><ArrowButton dir="d" off /></VBar>
            </OutputEdit>
          </OutputFrame>
        </Output>

        <DocTabs>
          <DocTab $w={137}><Icon name="brace" /><Txt>涡壳QDX2-16-O-new</Txt></DocTab>
          <DocTab $w={141} $active><Icon name="brace" /><Txt>叶轮QXD2截面FINAL</Txt></DocTab>
        </DocTabs>

        <StatusBar>
          <Hint><Txt>按F1键帮助</Txt></Hint>
          <Field $w={137}><Txt>当前拾取的零件实体:◇</Txt></Field>
          <Field $w={262} />
          <Field $w={23} />
          <Field $w={24} $bold><Txt>NUM</Txt></Field>
          <Field $w={29} />
          <Clock $w={76}><Txt>8:36:20 上午</Txt></Clock>
        </StatusBar>
      </Window>
    </>
  );
}
